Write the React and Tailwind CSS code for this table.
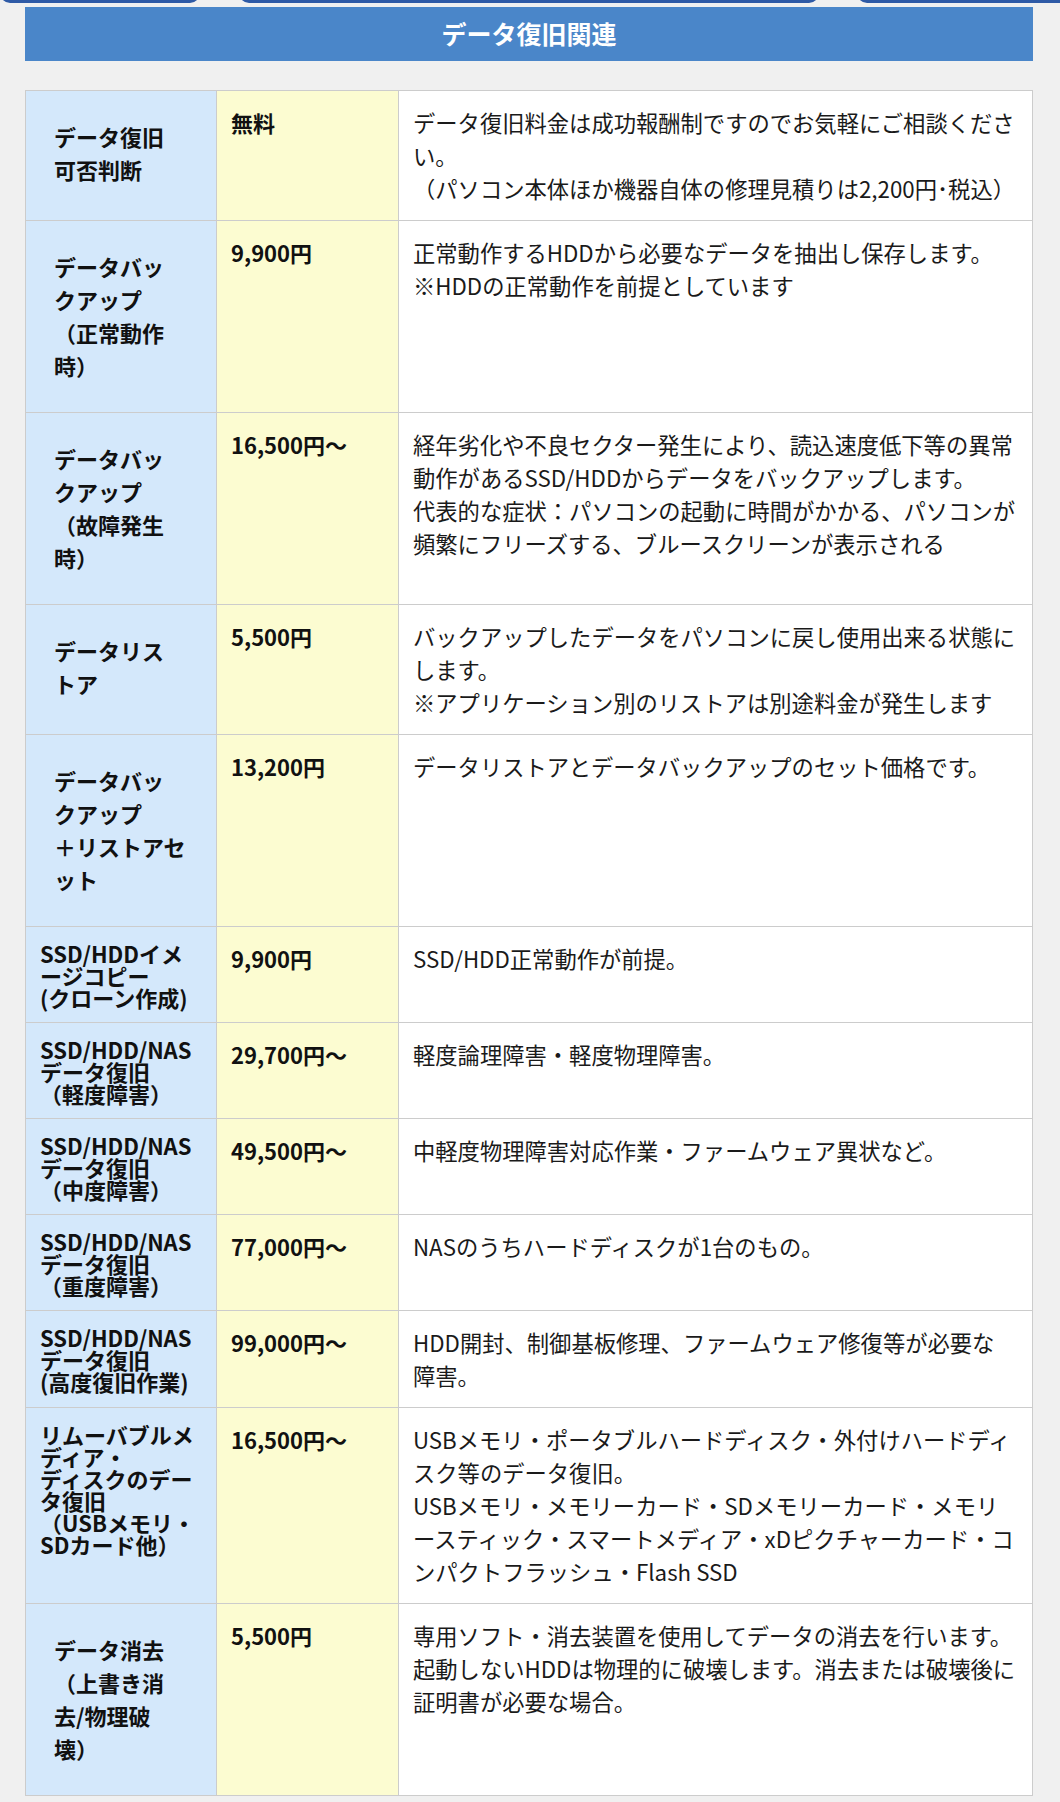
import React from 'react';

// ラベルのスタイル: wide = 余白広め, tight = 詰め
const rows = [
  {
    label: ['データ復旧', '可否判断'],
    style: 'wide',
    price: '無料',
    text: [
      'データ復旧料金は成功報酬制ですのでお気軽にご相談くださ',
      'い。',
      '（パソコン本体ほか機器自体の修理見積りは2,200円･税込）',
    ],
  },
  {
    label: ['データバッ', 'クアップ', '（正常動作', '時）'],
    style: 'wide',
    price: '9,900円',
    text: ['正常動作するHDDから必要なデータを抽出し保存します。', '※HDDの正常動作を前提としています'],
  },
  {
    label: ['データバッ', 'クアップ', '（故障発生', '時）'],
    style: 'wide',
    price: '16,500円〜',
    text: [
      '経年劣化や不良セクター発生により、読込速度低下等の異常',
      '動作があるSSD/HDDからデータをバックアップします。',
      '代表的な症状：パソコンの起動に時間がかかる、パソコンが',
      '頻繁にフリーズする、ブルースクリーンが表示される',
    ],
  },
  {
    label: ['データリス', 'トア'],
    style: 'wide',
    price: '5,500円',
    text: [
      'バックアップしたデータをパソコンに戻し使用出来る状態に',
      'します。',
      '※アプリケーション別のリストアは別途料金が発生します',
    ],
  },
  {
    label: ['データバッ', 'クアップ', '＋リストアセ', 'ット'],
    style: 'wide',
    price: '13,200円',
    text: ['データリストアとデータバックアップのセット価格です。'],
  },
  {
    label: ['SSD/HDDイメ', 'ージコピー', '(クローン作成)'],
    style: 'tight',
    price: '9,900円',
    text: ['SSD/HDD正常動作が前提。'],
  },
  {
    label: ['SSD/HDD/NAS', 'データ復旧', '（軽度障害）'],
    style: 'tight',
    price: '29,700円〜',
    text: ['軽度論理障害・軽度物理障害。'],
  },
  {
    label: ['SSD/HDD/NAS', 'データ復旧', '（中度障害）'],
    style: 'tight',
    price: '49,500円〜',
    text: ['中軽度物理障害対応作業・ファームウェア異状など。'],
  },
  {
    label: ['SSD/HDD/NAS', 'データ復旧', '（重度障害）'],
    style: 'tight',
    price: '77,000円〜',
    text: ['NASのうちハードディスクが1台のもの。'],
  },
  {
    label: ['SSD/HDD/NAS', 'データ復旧', '(高度復旧作業)'],
    style: 'tight',
    price: '99,000円〜',
    text: ['HDD開封、制御基板修理、ファームウェア修復等が必要な', '障害。'],
  },
  {
    label: ['リムーバブルメ', 'ディア・', 'ディスクのデー', 'タ復旧', '（USBメモリ・', 'SDカード他）'],
    style: 'tight',
    price: '16,500円〜',
    text: [
      'USBメモリ・ポータブルハードディスク・外付けハードディ',
      'スク等のデータ復旧。',
      'USBメモリ・メモリーカード・SDメモリーカード・メモリ',
      'ースティック・スマートメディア・xDピクチャーカード・コ',
      'ンパクトフラッシュ・Flash SSD',
    ],
  },
  {
    label: ['データ消去', '（上書き消', '去/物理破', '壊）'],
    style: 'wide',
    price: '5,500円',
    text: [
      '専用ソフト・消去装置を使用してデータの消去を行います。',
      '起動しないHDDは物理的に破壊します。消去または破壊後に',
      '証明書が必要な場合。',
    ],
  },
];

const Lines = ({ lines }) =>
  lines.map((l, i) => (
    <span key={i} className="block whitespace-nowrap">
      {l}
    </span>
  ));

const App = () => {
  return (
    <div className="min-h-[1802px] bg-[#f0f0f0] pb-[8px] font-['Noto_Sans_CJK_JP','Noto_Sans',sans-serif] text-[#111]">
      {/* 上のボタン群の下端 */}
      <div className="flex h-[3px] items-end overflow-hidden">
        <div className="h-[20px] w-[200px] shrink-0 rounded-b-[10px] bg-[#2e5aa6]" />
        <div className="ml-[39px] h-[20px] w-[580px] shrink-0 rounded-b-[10px] bg-[#2e5aa6]" />
        <div className="ml-[38px] h-[20px] flex-1 rounded-bl-[10px] bg-[#2e5aa6]" />
      </div>

      <div className="ml-[25px] mr-[27px] mt-[4px]">
        <h2 className="flex h-[54px] items-center justify-center bg-[#4a86c9] text-[25px] font-bold text-white">
          データ復旧関連
        </h2>

        <table className="mt-[29px] w-full table-fixed border-collapse">
          <colgroup>
            <col className="w-[191px]" />
            <col className="w-[182px]" />
            <col />
          </colgroup>
          <tbody>
            {rows.map((r, i) => (
              <tr key={i}>
                {r.style === 'wide' ? (
                  <th className="border border-[#cccccc] bg-[#d4e8fb] px-[28px] pt-[29px] pb-[30px] text-left align-top text-[22px] font-bold leading-[33px]">
                    <Lines lines={r.label} />
                  </th>
                ) : (
                  <th className="border border-[#cccccc] bg-[#d4e8fb] px-[14px] pt-[15px] pb-[14px] text-left align-top text-[22px] font-bold leading-[22px]">
                    <Lines lines={r.label} />
                  </th>
                )}
                <td className="border border-[#cccccc] bg-[#fcfcd1] px-[14px] py-[15px] align-top text-[22px] font-bold leading-[33px]">
                  {r.price}
                </td>
                <td className="border border-[#cccccc] bg-white px-[14px] py-[15px] align-top text-[22.3px] leading-[33px] text-[#1a1a1a]">
                  <Lines lines={r.text} />
                </td>
              </tr>
            ))}
          </tbody>
        </table>
      </div>
    </div>
  );
};

export default App;
